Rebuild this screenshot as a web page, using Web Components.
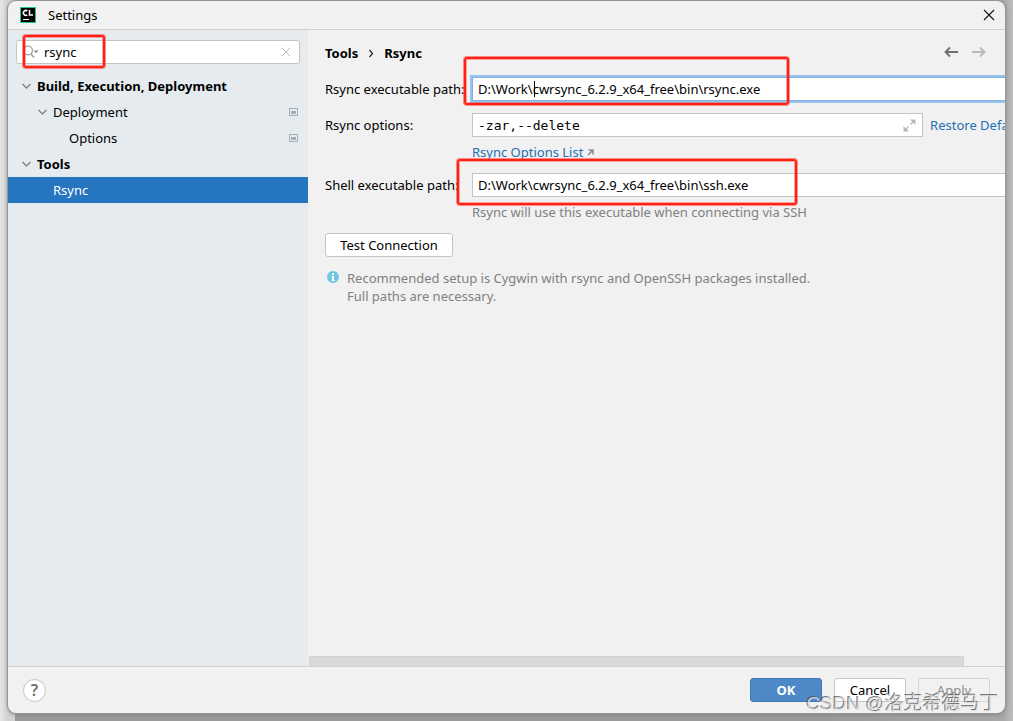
<!DOCTYPE html>
<html lang="en">
<head>
<meta charset="utf-8">
<title>Settings</title>
<style>
  html, body { height: 100%; }
  body {
    margin: 0;
    overflow: hidden;
    color: #000;
    font: 13px/18px "Noto Sans", "Noto Sans CJK SC", sans-serif;
    --line: #d1d1d1;
    --edge: #c4c4c4;
    --panel: #f1f1f1;
    --link: #2470b3;
    --muted: #808080;
    --mark: #ff2116;
  }
</style>
</head>
<body>
<settings-desktop>
  <settings-window caption="Settings">
    <settings-sidebar slot="sidebar">
      <tree-item level="0" state="open" bold>Build, Execution, Deployment</tree-item>
      <tree-item level="1" state="open" project>Deployment</tree-item>
      <tree-item level="2" project>Options</tree-item>
      <tree-item level="0" state="open" bold>Tools</tree-item>
      <tree-item level="1" selected>Rsync</tree-item>
    </settings-sidebar>
    <rsync-page slot="page"></rsync-page>
    <settings-footer slot="footer"></settings-footer>
  </settings-window>
</settings-desktop>

<script>
class BaseElement extends HTMLElement {
  connectedCallback() {
    if (this.shadowRoot) return;
    this.attachShadow({ mode: "open" }).innerHTML =
      "<style>*{box-sizing:border-box}button,input{font:inherit;color:inherit;margin:0}a{color:var(--link);text-decoration:none}svg{display:block}</style>" + this.render();
  }
}

customElements.define("settings-desktop", class extends BaseElement {
  render() { return `
    <style>
      :host { display: flex; box-sizing: border-box; height: 100vh; padding: 1px 8px 8px; position: relative;
        background: linear-gradient(90deg, #e6e6e6, #d2d2d2 8px, #d2d2d2 15px, #999 15px, #999 80%, #a8a8a8 99%, #bdbdbd); }
      ::slotted(*) { flex: 1; }
      .watermark { position: absolute; right: 14px; bottom: 3px; font-size: 19px; line-height: 28px; white-space: nowrap;
        font-family: "Liberation Sans", "Noto Sans CJK SC", sans-serif;
        color: rgba(225,225,225,.8); text-shadow: -1px -1px 0 rgba(80,80,80,.75); pointer-events: none; }
    </style>
    <slot></slot>
    <div class="watermark">CSDN @洛克希德马丁</div>`; }
});

customElements.define("settings-window", class extends BaseElement {
  render() { return `
    <style>
      :host { display: flex; flex-direction: column; min-width: 0; overflow: hidden; background: var(--panel);
        border-radius: 8px; box-shadow: 0 0 0 1px #969696, 0 1px 4px #777; }
      header { display: flex; align-items: center; gap: 12px; height: 29px; padding: 0 10px 0 12px; flex: none;
        border-bottom: 1px solid var(--line); }
      h1 { flex: 1; margin: 0; font-size: 13px; font-weight: 400; }
      button { padding: 0; border: 0; background: none; }
      main { display: flex; flex: 1; min-height: 0; }
    </style>
    <header>
      <svg width="16" height="16" viewBox="0 0 16 16" role="img" aria-label="CLion">
        <rect width="16" height="16" fill="#20c987"/><rect x="1" y="1" width="14" height="14" fill="#000"/>
        <path d="M7.300 4A2.400 2.400 0 1 0 7.300 7.800M9.500 3v5H13" fill="none" stroke="#fff" stroke-width="1.6"/>
        <path d="M3 12.500h6" stroke="#fff"/>
      </svg>
      <h1></h1>
      <button type="button" aria-label="Close"><svg width="12" height="12" viewBox="0 0 12 12"><path d="M1 1l10 10M11 1L1 11" stroke="#111" stroke-width="1.1"/></svg></button>
    </header>
    <main><slot name="sidebar"></slot><slot name="page"></slot></main>
    <slot name="footer"></slot>`; }
  connectedCallback() {
    super.connectedCallback();
    this.shadowRoot.querySelector("h1").textContent = this.getAttribute("caption");
  }
});

customElements.define("highlight-box", class extends BaseElement {
  render() { return `
    <style>:host { display: block; position: absolute; box-sizing: border-box; border: 2px solid var(--mark);
      outline: 1px solid rgba(255,70,60,.45); outline-offset: -3px;
      box-shadow: 0 0 0 1px rgba(255,70,60,.6); border-radius: 3px; pointer-events: none; }</style>`; }
});

customElements.define("settings-sidebar", class extends BaseElement {
  render() { return `
    <style>
      :host { display: block; flex: 0 0 300px; background: #e5ebef; }
      .search { display: flex; align-items: center; position: relative; height: 24px; margin: 10px 8px 9px; padding: 0 8px 0 6px;
        background: #fff; border: 1px solid var(--edge); border-radius: 3px; }
      input { flex: 1; min-width: 0; height: 22px; padding: 0 0 0 5px; border: 0; outline: 0; background: none; }
      button { padding: 0; border: 0; background: none; }
      highlight-box { left: 6px; top: -6px; width: 82px; height: 33px; }
    </style>
    <div class="search">
      <svg width="16" height="14" viewBox="0 0 16 14" fill="none" stroke="#9aa0a6">
        <circle cx="5" cy="5.500" r="4.400" stroke-width="1.2"/><path d="M8 9l3 3.500" stroke-width="1.6"/><path d="M10.500 5.500h5L13 8.300z" fill="#8a9097" stroke="none"/></svg>
      <input type="text" value="rsync" aria-label="Search settings">
      <button type="button" aria-label="Clear search"><svg width="10" height="10" viewBox="0 0 10 10"><path d="M1 1l8 8M9 1L1 9" stroke="#b5b8ba"/></svg></button>
      <highlight-box></highlight-box>
    </div>
    <div role="tree"><slot></slot></div>`; }
});

customElements.define("tree-item", class extends BaseElement {
  render() { return `
    <style>
      :host { display: flex; align-items: center; gap: 5px; height: 26px; padding: 0 10px 0 13px; }
      :host([level="1"]) { padding-left: 29px; }
      :host([level="2"]) { padding-left: 45px; }
      :host([bold]) { font-weight: 700; }
      :host([selected]) { background: #2675bf; color: #fff; }
      span { flex: 1; white-space: nowrap; }
      .arrow { visibility: hidden; }
      :host([state="open"]) .arrow { visibility: visible; }
      .project { display: none; }
      :host([project]) .project { display: block; }
    </style>
    <svg class="arrow" width="11" height="8" viewBox="0 0 11 8"><path d="M1.500 2l4 4 4-4" fill="none" stroke="#7f8589" stroke-width="1.4"/></svg>
    <span><slot></slot></span>
    <svg class="project" width="9" height="8" viewBox="0 0 9 8"><rect x=".5" y=".5" width="8" height="7" fill="none" stroke="#a5afb6"/><rect x="2" y="3" width="5" height="3" fill="#a5afb6"/></svg>`; }
  connectedCallback() {
    super.connectedCallback();
    this.setAttribute("role", "treeitem");
  }
});

customElements.define("rsync-page", class extends BaseElement {
  render() { return `
    <style>
      :host { display: flex; flex-direction: column; flex: 1; min-width: 0; overflow: hidden; }
      nav { display: flex; align-items: center; gap: 10px; height: 24px; margin: 11px 19px 12px 17px; font-weight: 700; }
      nav .space { flex: 1; }
      nav button { padding: 0 0 2px; border: 0; background: none; }
      form { flex: 1; width: calc(100% + 43px); padding: 0 17px; }
      .row { display: grid; grid-template-columns: 147px 1fr; align-items: center; margin-bottom: 12px; }
      .row.tight { margin-bottom: 6px; }
      label { white-space: nowrap; }
      .field { display: flex; align-items: center; position: relative; height: 24px; }
      input { flex: 1; min-width: 0; width: 100%; height: 24px; padding: 0 5px; background: #fff; border: 1px solid var(--edge); border-radius: 0; outline: 0; }
      .focused input { border-color: #87afda; box-shadow: 0 0 0 2px #97c3f3; }
      .mono input { font-family: "DejaVu Sans Mono", monospace; }
      .mono { gap: 7px; }
      .wrap { display: flex; flex: 1; position: relative; }
      .wrap button { position: absolute; right: 7px; top: 6px; padding: 0; border: 0; background: none; }
      .caret { position: absolute; left: 62px; top: 4px; width: 1px; height: 16px; background: #000; }
      .help { display: flex; align-items: center; gap: 4px; grid-column: 2; }
      .muted { color: var(--muted); }
      .test { display: block; width: 128px; height: 24px; margin: 12px 0; padding: 0; background: #fff; border: 1px solid var(--edge); border-radius: 3px; }
      .note { display: flex; gap: 8px; padding-left: 2px; }
      .note svg { margin-top: 2px; }
      p { margin: 0; }
      .first { left: -8px; top: -20px; width: 325px; height: 48px; }
      .second { left: -15px; top: -14px; width: 340px; height: 46px; }
      .bar { width: 94%; height: 10px; margin-left: 1px; background: #d9d9d9; border: 1px solid #d2d2d2; border-bottom: 0; }
    </style>
    <nav aria-label="Breadcrumb">
      <span>Tools</span>
      <svg width="6" height="9" viewBox="0 0 6 9"><path d="M1.500 1l3 3.500-3 3.500" fill="none" stroke="#222" stroke-width="1.2"/></svg>
      <span>Rsync</span><span class="space"></span>
      <button type="button" aria-label="Back"><svg width="14" height="12" viewBox="0 0 14 12"><path d="M1.500 6H14M6 1.500L1.500 6 6 10.500" fill="none" stroke="#6e6e6e" stroke-width="1.8"/></svg></button>
      <button type="button" aria-label="Forward"><svg width="18" height="12" viewBox="-4 0 18 12"><path d="M0 6h12.500M8 1.500L12.500 6 8 10.500" fill="none" stroke="#b9b9b9" stroke-width="1.8"/></svg></button>
    </nav>
    <form>
      <div class="row">
        <label for="exe">Rsync executable path:</label>
        <div class="field focused"><input id="exe" type="text" value="D:\\Work\\cwrsync_6.2.9_x64_free\\bin\\rsync.exe"><span class="caret"></span><highlight-box class="first"></highlight-box></div>
      </div>
      <div class="row tight">
        <label for="opts">Rsync options:</label>
        <div class="field mono">
          <div class="wrap"><input id="opts" type="text" value="-zar,--delete">
            <button type="button" aria-label="Expand"><svg width="13" height="13" viewBox="0 0 13 13" fill="#b5b8ba"><path d="M7 0.500h5.500V6zM.5 7v5.500H6z"/><path d="M11 2L7.500 5.500M5.500 7.500L2 11" stroke="#b5b8ba" stroke-width="1.4"/></svg></button></div>
          <a href="#restore">Restore Defaults</a>
        </div>
      </div>
      <div class="row">
        <div class="help"><a href="#list">Rsync Options List</a><svg width="7" height="7" viewBox="0 0 7 7"><path d="M1.500 1H6v4.500M6 1L1 6" fill="none" stroke="#8a8f94" stroke-width="1.6"/></svg></div>
      </div>
      <div class="row tight">
        <label for="shell">Shell executable path:</label>
        <div class="field"><input id="shell" type="text" value="D:\\Work\\cwrsync_6.2.9_x64_free\\bin\\ssh.exe"><highlight-box class="second"></highlight-box></div>
      </div>
      <div class="row"><div class="help muted">Rsync will use this executable when connecting via SSH</div></div>
      <button class="test" type="button">Test Connection</button>
      <div class="note muted">
        <svg width="12" height="12" viewBox="0 0 12 12"><circle cx="6" cy="6" r="6" fill="#71c5e4"/><path d="M5 2h2v2H5zM4.500 5H7v4h1v1H4.500V9H5V6h-.5z" fill="#fff"/></svg>
        <p>Recommended setup is Cygwin with rsync and OpenSSH packages installed.<br>Full paths are necessary.</p>
      </div>
    </form>
    <div class="bar"></div>`; }
});

customElements.define("settings-footer", class extends BaseElement {
  render() { return `
    <style>
      :host { display: flex; align-items: center; gap: 12px; flex: none; box-sizing: border-box; height: 47px; padding: 0 15px; border-top: 1px solid var(--line); }
      button { width: 72px; height: 24px; padding: 0; background: #fff; border: 1px solid var(--edge); border-radius: 3px; }
      .help { width: 23px; height: 23px; margin-right: auto; border-radius: 50%; color: #6e6e6e; font-size: 16px; line-height: 20px; font-weight: 600; }
      .ok { background: #4e89c7; border-color: #4478b5; color: #fff; font-weight: 700; }
      .apply { background: none; border-color: #d4d4d4; color: #8c8c8c; }
    </style>
    <button class="help" type="button" aria-label="Help">?</button>
    <button class="ok" type="button">OK</button>
    <button type="button">Cancel</button>
    <button class="apply" type="button" disabled>Apply</button>`; }
});
</script>
</body>
</html>
